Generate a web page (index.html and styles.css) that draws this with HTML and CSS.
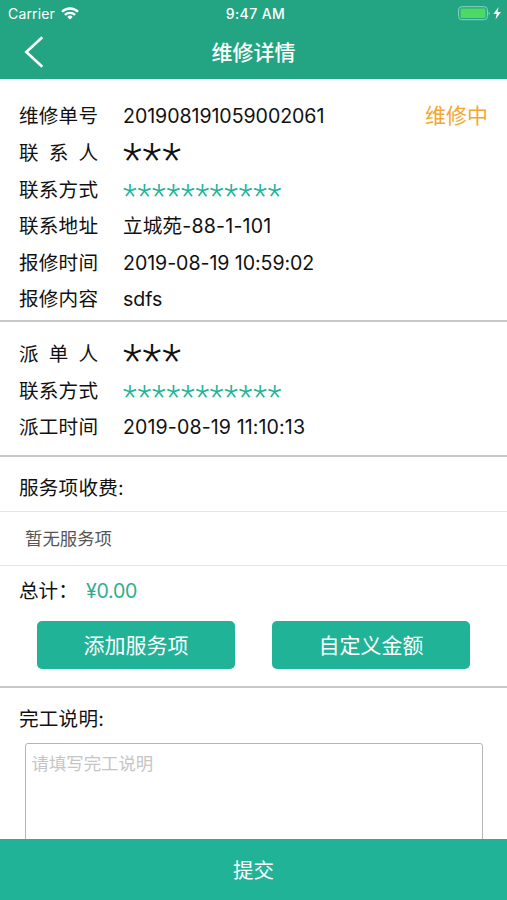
FILE: index.html
```html
<!DOCTYPE html>
<html lang="zh-CN">
<head>
<meta charset="utf-8">
<title>维修详情</title>
<link rel="stylesheet" href="styles.css">
</head>
<body>
<div class="app">
  <header class="header">
    <div class="status">
      <div class="carrier">Carrier
        <svg width="18" height="13" viewBox="0 0 18 13" fill="none" stroke="#fff" stroke-width="2.3"><path d="M1 4.8a11.3 11.3 0 0 1 16 0M3.9 7.9a7.2 7.2 0 0 1 10.2 0"/><path d="M9 12.6 6.3 9.9a3.8 3.8 0 0 1 5.4 0z" fill="#fff" stroke="none"/></svg>
      </div>
      <div class="clock">9:47 AM</div>
      <div class="power">
        <svg width="44" height="15" viewBox="0 0 44 15"><rect x=".6" y=".7" width="28.8" height="13" rx="3.2" fill="none" stroke="#8fd2bd" stroke-width="1"/><rect x="2.5" y="2.5" width="25" height="9.5" rx="1.3" fill="#4cd964"/><path d="M30.7 5.2q2 2 0 4z" fill="#8fd2bd"/><path d="M40.6 1 35.4 8h3.3l-1.2 5.6L42.9 6h-3.4z" fill="#fff"/></svg>
      </div>
    </div>
    <nav class="nav">
      <svg class="back" width="20" height="32" viewBox="0 0 20 32" fill="none" stroke="#fff" stroke-width="2.6"><path d="M18.3 1.2 2.3 16 18.3 30.8"/></svg>
      <h1 class="title">维修详情</h1>
    </nav>
  </header>

  <main class="content">
    <section class="info order">
      <div class="row"><span class="label">维修单号</span><span class="value number">201908191059002061</span><span class="state">维修中</span></div>
      <div class="row"><span class="label">联 系 人</span><span class="value name">***</span></div>
      <div class="row"><span class="label">联系方式</span><span class="value phone">***********</span></div>
      <div class="row"><span class="label">联系地址</span><span class="value address">立城苑-88-1-101</span></div>
      <div class="row"><span class="label">报修时间</span><span class="value">2019-08-19 10:59:02</span></div>
      <div class="row"><span class="label">报修内容</span><span class="value">sdfs</span></div>
    </section>
    <section class="info dispatch">
      <div class="row"><span class="label">派 单 人</span><span class="value name">***</span></div>
      <div class="row"><span class="label">联系方式</span><span class="value phone">***********</span></div>
      <div class="row"><span class="label">派工时间</span><span class="value dispatched">2019-08-19 11:10:13</span></div>
    </section>
    <section class="fees">
      <h2 class="heading">服务项收费:</h2>
      <p class="empty">暂无服务项</p>
      <div class="total"><span class="total-label">总计：</span><span class="amount">¥0.00</span></div>
      <div class="actions"><button class="button">添加服务项</button><button class="button">自定义金额</button></div>
    </section>
    <section class="report">
      <h2 class="heading">完工说明:</h2>
      <div class="note">请填写完工说明</div>
    </section>
  </main>
  <button class="submit">提交</button>
</div>
</body>
</html>
```
FILE: styles.css
```css
* { box-sizing: border-box; margin: 0; padding: 0; }
body { background: #fff; color: #111; font: 19.6px/36.6px Inter, "Noto Sans CJK SC", sans-serif; }
button { border: 0; font: inherit; color: #fff; background: #20b397; }
.app { display: flex; flex-direction: column; height: 900px; overflow: hidden; }
.header { height: 79px; flex: none; background: #23a583; color: #fff; }
.status { display: grid; grid-template-columns: 1fr auto 1fr; height: 27px; padding: 0 5px 0 8px; font-size: 14px; line-height: 27px; }
.carrier { display: flex; align-items: center; gap: 6px; letter-spacing: .15px; }
.clock { padding-left: 1px; font-weight: 500; font-size: 14px; letter-spacing: .4px; }
.power { display: flex; align-items: center; justify-content: flex-end; }
.nav { display: grid; grid-template-columns: 1fr auto 1fr; align-items: center; height: 50px; padding: 0 24px; }
.title { padding-top: 2px; font-size: 21px; font-weight: 500; }
.content { flex: 1; min-height: 0; overflow: hidden; }
.info { border-bottom: 2px solid #c8c8c8; }
.order { height: 243px; padding-top: 19.4px; }
.dispatch { height: 135px; padding-top: 14px; }
.row { display: flex; height: 36.6px; padding: 0 19px; white-space: nowrap; }
.label { width: 79px; margin-right: 25px; text-align-last: justify; }
.value { letter-spacing: -.07px; }
.address { letter-spacing: .17px; }
.dispatched { letter-spacing: .1px; }
.state { margin-left: auto; font-size: 21px; color: #f5a62e; }
.name { font: 300 44px/50px Roboto, sans-serif; letter-spacing: .9px; }
.phone { font: 300 32px/46px Roboto, sans-serif; letter-spacing: .9px; color: #20b397; }
.fees { height: 231px; border-bottom: 2px solid #c8c8c8; }
.heading { height: 55px; padding: 13px 19px 0; border-bottom: 1px solid #e6e6e6; font-size: 19.6px; font-weight: 400; letter-spacing: .2px; }
.empty { height: 54px; padding-left: 25px; border-bottom: 1px solid #e6e6e6; font-size: 17.4px; line-height: 54px; color: #555; }
.total { display: flex; height: 55px; padding: 7px 19px 0; }
.total-label { width: 67px; }
.amount { letter-spacing: -.3px; color: #35ab8b; }
.actions { display: flex; justify-content: space-between; padding: 0 37px; }
.button { width: 198px; height: 48px; padding-top: 2px; border-radius: 5px; font-size: 21px; }
.report .heading { border: 0; }
.note { height: 150px; margin: 0 24px 0 25px; padding: 2px 5.5px; border: 1px solid #b5b5b5; border-radius: 3px; font-size: 17.4px; color: #c5c5c5; }
.submit { flex: none; height: 61px; padding-top: 3px; font-size: 20.5px; }
```
